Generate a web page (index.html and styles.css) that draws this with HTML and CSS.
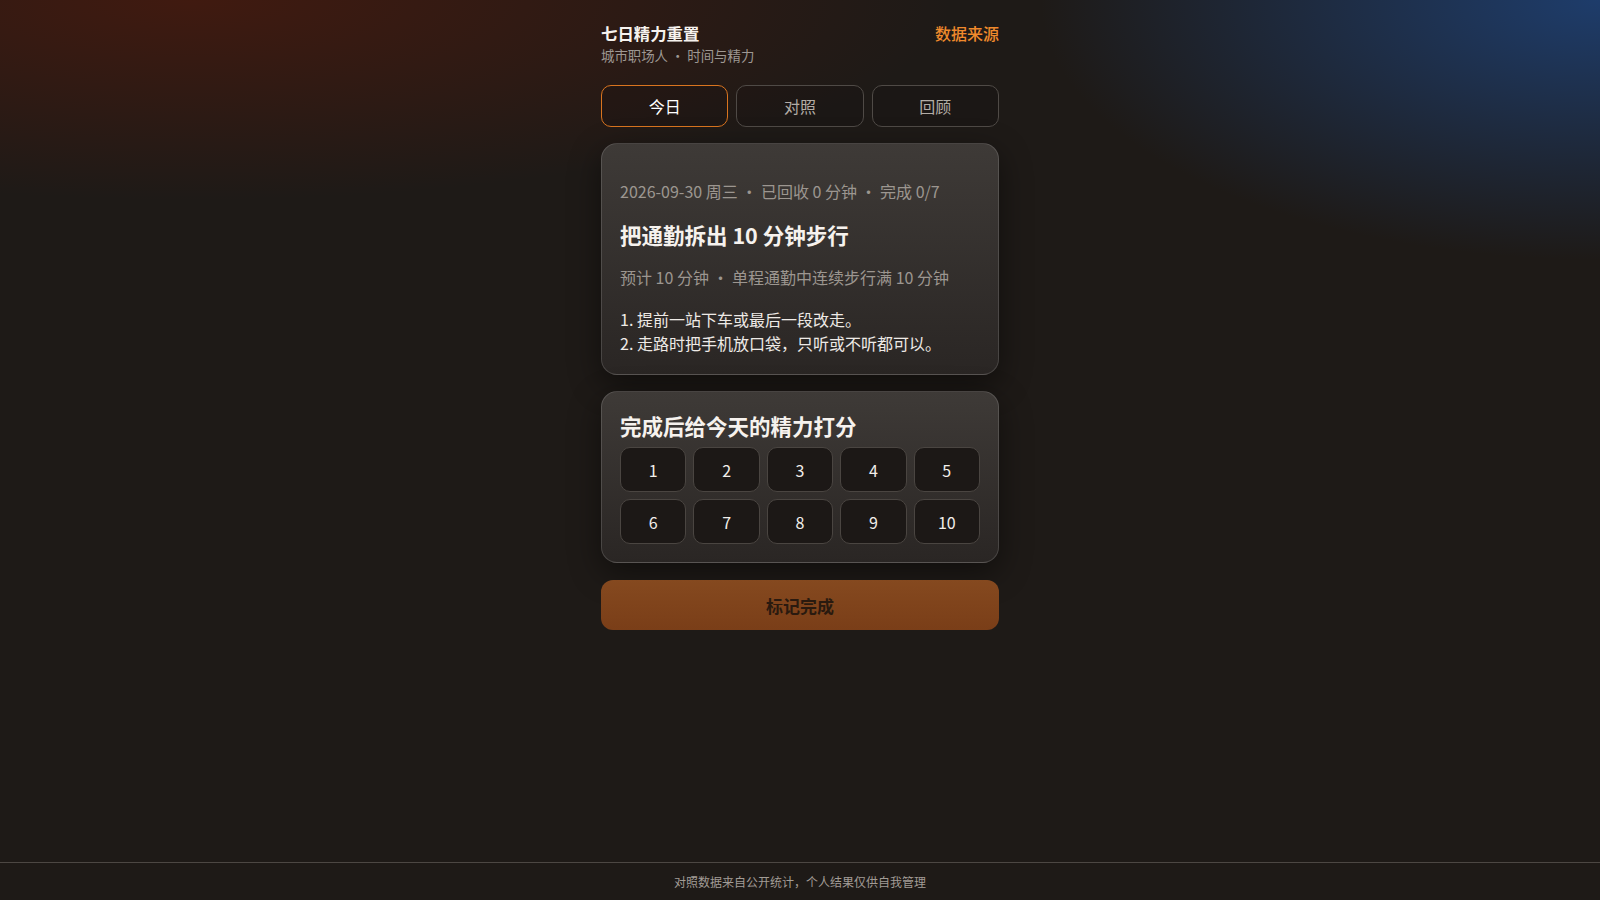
FILE: index.html
```html
<!DOCTYPE html>
<html lang="zh-CN">
<head>
<meta charset="utf-8">
<title>七日精力重置</title>
<link rel="stylesheet" href="styles.css">
</head>
<body>
<main class="app">
  <header class="top">
    <div class="brand">
      <div class="brand-title">七日精力重置</div>
      <div class="brand-sub">城市职场人 · 时间与精力</div>
    </div>
    <a class="source-link">数据来源</a>
  </header>

  <nav class="tabs">
    <button class="tab tab-active">今日</button>
    <button class="tab">对照</button>
    <button class="tab">回顾</button>
  </nav>

  <section class="card task-card">
    <div class="meta">2026-09-30 周三 · 已回收 0 分钟 · 完成 0/7</div>
    <h2 class="task-title">把通勤拆出 10 分钟步行</h2>
    <div class="task-sub">预计 10 分钟 · 单程通勤中连续步行满 10 分钟</div>
    <ol class="steps">
      <li>1. 提前一站下车或最后一段改走。</li>
      <li>2. 走路时把手机放口袋，只听或不听都可以。</li>
    </ol>
  </section>

  <section class="card rate-card">
    <h2 class="rate-title">完成后给今天的精力打分</h2>
    <div class="rate-grid">
      <button class="rate-btn">1</button>
      <button class="rate-btn">2</button>
      <button class="rate-btn">3</button>
      <button class="rate-btn">4</button>
      <button class="rate-btn">5</button>
      <button class="rate-btn">6</button>
      <button class="rate-btn">7</button>
      <button class="rate-btn">8</button>
      <button class="rate-btn">9</button>
      <button class="rate-btn">10</button>
    </div>
  </section>

  <button class="done-btn">标记完成</button>
</main>

<footer class="foot">对照数据来自公开统计，个人结果仅供自我管理</footer>
</body>
</html>
```

FILE: styles.css
```css
* {
  box-sizing: border-box;
}

html, body {
  height: 100%;
}

body {
  margin: 0;
  min-height: 100vh;
  display: flex;
  flex-direction: column;
  font-family: "Noto Sans CJK SC", "Noto Sans", sans-serif;
  color: #f2eeea;
  background:
    radial-gradient(ellipse 760px 200px at 12% 0%, rgba(92, 26, 10, 0.55), rgba(92, 26, 10, 0) 100%),
    radial-gradient(ellipse 560px 260px at 100% 0%, rgba(30, 72, 135, 0.75), rgba(30, 72, 135, 0) 100%),
    #1e1a17;
}

.app {
  width: 398px;
  margin: 0 auto;
  padding-top: 21px;
  display: flex;
  flex-direction: column;
}

.top {
  display: flex;
  justify-content: space-between;
  align-items: flex-start;
}

.brand-title {
  font-size: 16.4px;
  font-weight: 700;
  line-height: 24px;
  color: #f6f2ee;
}

.brand-sub {
  font-size: 13.4px;
  line-height: 21px;
  color: #9e9893;
}

.source-link {
  font-size: 16px;
  line-height: 24px;
  font-weight: 500;
  color: #f08a2c;
  cursor: pointer;
}

.tabs {
  margin-top: 19px;
  display: grid;
  grid-template-columns: repeat(3, 1fr);
  gap: 8px;
}

.tab {
  height: 42px;
  border: 1px solid #4f4a46;
  border-radius: 10px;
  background: rgba(0, 0, 0, 0.08);
  color: #b2aca6;
  font-family: inherit;
  font-size: 16px;
}

.tab-active {
  border-color: #d9741f;
  color: #ffffff;
}

.card {
  margin-top: 16px;
  border: 1px solid rgba(255, 255, 255, 0.14);
  border-radius: 16px;
  background: linear-gradient(180deg, #3e3a37 0%, #2a2624 100%);
  box-shadow: 0 10px 32px rgba(0, 0, 0, 0.45);
  padding: 18px;
}

.task-card {
  padding-bottom: 19px;
}

.meta {
  margin-top: 17px;
  font-size: 16px;
  line-height: 24px;
  color: #9c9690;
}

.task-title {
  margin: 17px 0 0;
  font-size: 21.5px;
  line-height: 30px;
  font-weight: 700;
  color: #f6f2ee;
}

.task-sub {
  margin-top: 15px;
  font-size: 16px;
  line-height: 24px;
  color: #9c9690;
}

.steps {
  list-style: none;
  margin: 18px 0 0;
  padding: 0;
  font-size: 16px;
  line-height: 24px;
  color: #eeeae6;
}

.rate-title {
  margin: 0;
  font-size: 21.5px;
  line-height: 32px;
  font-weight: 700;
  color: #f6f2ee;
}

.rate-grid {
  margin-top: 5px;
  display: grid;
  grid-template-columns: repeat(5, 1fr);
  gap: 7px;
}

.rate-btn {
  height: 45px;
  border: 1px solid #4a4541;
  border-radius: 10px;
  background: #1c1816;
  color: #f2eeea;
  font-family: inherit;
  font-size: 16px;
}

.done-btn {
  margin-top: 17px;
  height: 50px;
  border: none;
  border-radius: 12px;
  background: linear-gradient(180deg, #85491f 0%, #7a3e18 100%);
  color: #2a1a0f;
  font-family: inherit;
  font-size: 17px;
  font-weight: 700;
}

.foot {
  margin-top: auto;
  border-top: 1px solid #4c4743;
  padding: 10px 0 9px;
  text-align: center;
  font-size: 12px;
  line-height: 18px;
  color: #a29c96;
}
```
